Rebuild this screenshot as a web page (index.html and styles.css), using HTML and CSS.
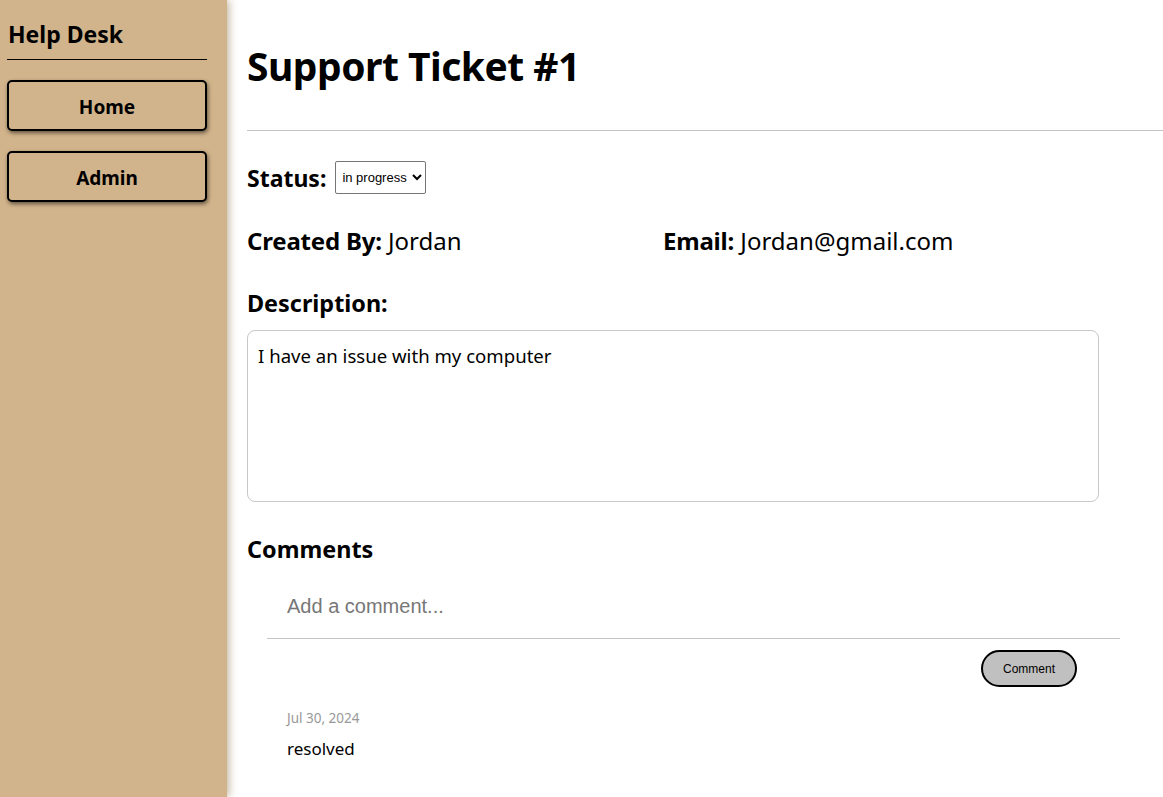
FILE: index.html
```html
<!DOCTYPE html>
<html lang="en">
<head>
<meta charset="utf-8">
<title>Help Desk</title>
<link rel="stylesheet" href="styles.css">
</head>
<body>
<div class="app">
  <aside class="sidebar">
    <h2 class="brand">Help Desk</h2>
    <div class="brand-rule"></div>
    <nav class="nav">
      <button class="nav-btn">Home</button>
      <button class="nav-btn">Admin</button>
    </nav>
  </aside>
  <main class="main">
    <h1 class="title">Support Ticket #1</h1>
    <div class="rule"></div>
    <div class="status-row">
      <span class="label">Status:</span>
      <select class="status-select">
        <option>new</option>
        <option selected>in progress</option>
        <option>resolved</option>
      </select>
    </div>
    <div class="info-row">
      <div class="info"><span class="label">Created By:</span> Jordan</div>
      <div class="info"><span class="label">Email:</span> Jordan@gmail.com</div>
    </div>
    <div class="label section-label">Description:</div>
    <div class="description">I have an issue with my computer</div>
    <div class="label comments-label">Comments</div>
    <div class="comment-form">
      <div class="comment-input">Add a comment...</div>
      <div class="comment-actions">
        <button class="comment-btn">Comment</button>
      </div>
    </div>
    <div class="comment">
      <div class="comment-date">Jul 30, 2024</div>
      <div class="comment-text">resolved</div>
    </div>
  </main>
</div>
</body>
</html>
```

FILE: styles.css
```css
* { box-sizing: border-box; }
html, body { margin: 0; padding: 0; }
body {
  font-family: "Noto Sans", "Open Sans", sans-serif;
  color: #000;
  background: #fff;
}
.app {
  display: flex;
  min-height: 797px;
}
.sidebar {
  width: 227px;
  flex: 0 0 227px;
  background: #d2b48c;
  padding: 20px 20px 0 7px;
  box-shadow: 2px 0 8px rgba(120, 90, 40, 0.45);
  position: relative;
  z-index: 1;
}
.brand {
  margin: 0 0 0 1px;
  font-size: 23px;
  font-weight: 700;
  line-height: 28px;
}
.brand-rule {
  height: 1px;
  background: #000;
  margin-top: 11px;
}
.nav {
  display: flex;
  flex-direction: column;
  gap: 20px;
  margin-top: 20px;
}
.nav-btn {
  height: 51px;
  width: 200px;
  background: #d2b48c;
  border: 2px solid #000;
  border-radius: 5px;
  box-shadow: 1px 2px 4px rgba(0, 0, 0, 0.55);
  font-family: inherit;
  font-size: 19px;
  font-weight: 700;
  color: #000;
  padding: 3px 0 0;
}
.main {
  flex: 1;
  padding-left: 20px;
}
.title {
  margin: 0;
  padding-top: 40px;
  font-size: 39px;
  letter-spacing: -0.5px;
  line-height: 52px;
  font-weight: 700;
}
.rule {
  height: 1px;
  background: #c4c4c4;
  margin-top: 38px;
}
.label { font-weight: 700; }
.status-row {
  display: flex;
  align-items: center;
  gap: 9px;
  margin-top: 30px;
  font-size: 23px;
}
.status-select {
  height: 33px;
  font-family: "Liberation Sans", Arial, sans-serif;
  font-size: 13px;
  border: 1px solid #767676;
  border-radius: 2px;
  background: #fff;
  padding: 0 2px;
}
.info-row {
  display: flex;
  margin-top: 32px;
  font-size: 24px;
  line-height: 30px;
}
.info-row .label { letter-spacing: -0.2px; }
.info { width: 416px; }
.section-label {
  margin-top: 32px;
  font-size: 23.4px;
  line-height: 30px;
}
.description {
  margin-top: 12px;
  width: 852px;
  height: 172px;
  border: 1px solid #c8c8c8;
  border-radius: 8px;
  padding: 13px 10px;
  font-size: 18.6px;
  line-height: 24px;
}
.comments-label {
  margin-top: 32px;
  font-size: 23.4px;
  line-height: 30px;
}
.comment-form {
  margin-left: 20px;
  width: 853px;
  margin-top: 28px;
}
.comment-input {
  font-family: "Liberation Sans", Arial, sans-serif;
  font-size: 20px;
  color: #777;
  padding: 0 20px 18px;
  line-height: 28px;
  border-bottom: 1px solid #c4c4c4;
}
.comment-actions {
  display: flex;
  justify-content: flex-end;
  padding: 11px 43px 0 0;
}
.comment-btn {
  width: 96px;
  height: 37px;
  background: #c0c0c0;
  border: 2px solid #000;
  border-radius: 19px;
  font-family: "Liberation Sans", Arial, sans-serif;
  font-size: 12px;
  color: #000;
}
.comment {
  margin-left: 40px;
  margin-top: 22px;
}
.comment-date {
  font-size: 13.5px;
  color: #999;
  line-height: 18px;
}
.comment-text {
  margin-top: 11px;
  font-size: 17px;
  line-height: 22px;
}
```
